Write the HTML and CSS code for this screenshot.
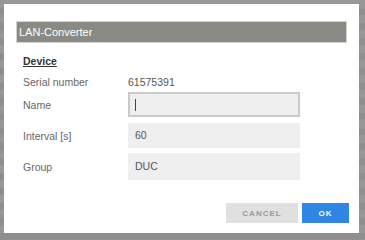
FILE: index.html
```html
<!DOCTYPE html>
<html lang="en">
<head>
    <meta charset="UTF-8">
    <meta name="viewport" content="width=device-width, initial-scale=1.0">
    <title>LAN-Converter</title>
    <link rel="stylesheet" href="styles.css">
</head>
<body>
    <div class="backdrop">
        <div class="dialog">
            <div class="dialog-title">LAN-Converter</div>
            <div class="section-title">Device</div>
            <div class="form">
                <div class="row serial">
                    <label>Serial number</label>
                    <div class="value">61575391</div>
                </div>
                <div class="row name">
                    <label>Name</label>
                    <div class="field focused"><span class="caret"></span></div>
                </div>
                <div class="row interval">
                    <label>Interval [s]</label>
                    <div class="field">60</div>
                </div>
                <div class="row group">
                    <label>Group</label>
                    <div class="field">DUC</div>
                </div>
            </div>
            <div class="actions">
                <button class="btn cancel">Cancel</button>
                <button class="btn ok">OK</button>
            </div>
        </div>
    </div>
</body>
</html>
```

FILE: styles.css
```css
body {
    margin: 0;
    font-family: "Liberation Sans", Arial, sans-serif;
    font-size: 10.5px;
    color: #555;
}
.backdrop {
    height: 240px;
    padding: 4px 0 0 4px;
    box-sizing: border-box;
    background: repeating-linear-gradient(#979797 0 8px, #8f8f8f 8px 15px);
}
.dialog {
    width: 355px;
    height: 229px;
    box-sizing: border-box;
    background: white;
    padding: 17px 10px 10px 12px;
    display: flex;
    flex-direction: column;
}
.dialog-title {
    height: 22px;
    margin-right: 2px;
    box-sizing: border-box;
    border: 1px solid #d2d2cf;
    background: #8a8a85;
    color: white;
    font-size: 11px;
    line-height: 20px;
    padding-left: 2px;
}
.section-title {
    margin: 11px 0 0 7px;
    font-weight: bold;
    text-decoration: underline;
    color: #333;
    line-height: 14px;
}
.form {
    margin: 7px 0 0 7px;
}
.row {
    display: flex;
    align-items: center;
}
.row label {
    width: 105px;
    color: #666;
}
.serial {
    height: 14px;
}
.name {
    margin-top: 3px;
}
.interval {
    margin-top: 6px;
}
.group {
    margin-top: 5px;
}
.field {
    width: 172px;
    height: 25px;
    box-sizing: border-box;
    background: #efefef;
    padding-left: 7px;
    line-height: 25px;
    color: #555;
}
.focused {
    border: 2px solid #cacaca;
    padding-left: 5px;
    display: flex;
    align-items: center;
}
.caret {
    width: 1px;
    height: 12px;
    background: #444;
}
.group .field {
    height: 27px;
    line-height: 27px;
}
.actions {
    display: flex;
    justify-content: flex-end;
    gap: 4px;
    margin-top: auto;
}
.btn {
    height: 20px;
    border: none;
    font-family: "Liberation Sans", Arial, sans-serif;
    font-size: 8px;
    font-weight: bold;
    letter-spacing: 1px;
    text-transform: uppercase;
    cursor: pointer;
}
.cancel {
    width: 72px;
    background: #e0e0e0;
    color: #999;
}
.ok {
    width: 47px;
    background: #2f86e4;
    color: white;
}
```
